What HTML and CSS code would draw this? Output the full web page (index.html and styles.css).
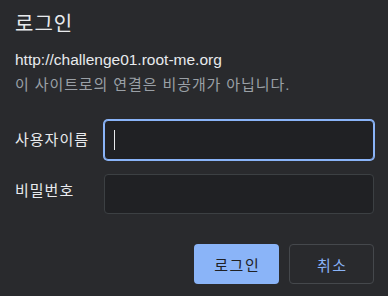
FILE: index.html
```html
<!DOCTYPE html>
<html lang="ko">
<head>
    <meta charset="UTF-8">
    <meta name="viewport" content="width=device-width, initial-scale=1.0">
    <title>로그인</title>
    <link rel="stylesheet" href="styles.css">
</head>
<body>

    <div class="dialog">
        <!-- Header -->
        <div class="dialog-title">로그인</div>
        <div class="site-url">http://challenge01.root-me.org</div>
        <div class="site-warning">이 사이트로의 연결은 비공개가 아닙니다.</div>

        <!-- Form -->
        <div class="form-row">
            <label class="form-label" for="username">사용자이름</label>
            <div class="text-field focused" id="username"><span class="caret"></span></div>
        </div>
        <div class="form-row second">
            <label class="form-label" for="password">비밀번호</label>
            <div class="text-field" id="password"></div>
        </div>

        <!-- Buttons -->
        <div class="button-row">
            <button class="btn btn-primary">로그인</button>
            <button class="btn btn-secondary">취소</button>
        </div>
    </div>

</body>
</html>
```

FILE: styles.css
```css
* {
    margin: 0;
    padding: 0;
    box-sizing: border-box;
    font-family: "Liberation Sans", "Noto Sans CJK KR", sans-serif;
}

body {
    background-color: #292a2d;
    color: #e8eaed;
    width: 388px;
    height: 296px;
    overflow: hidden;
}

.dialog {
    padding: 10px 14px 0 15px;
}

.dialog-title {
    font-size: 20px;
    line-height: 28px;
    letter-spacing: 1px;
}

.site-url {
    font-size: 15.5px;
    line-height: 20px;
    margin-top: 12px;
}

.site-warning {
    font-size: 15px;
    line-height: 20px;
    margin-top: 5px;
    letter-spacing: 0.9px;
    color: #9aa0a6;
}

.form-row {
    display: flex;
    align-items: center;
    margin-top: 25px;
}

.form-row.second {
    margin-top: 14px;
}

.form-label {
    width: 89px;
    font-size: 15px;
    line-height: 20px;
    letter-spacing: 1px;
}

.second .form-label {
    margin-top: -6px;
}

.text-field {
    width: 270px;
    height: 40px;
    background-color: #202124;
    border: 1px solid #3c4043;
    border-radius: 4px;
    display: flex;
    align-items: center;
    padding-left: 9px;
}

.text-field.focused {
    border-color: #8ab4f8;
    box-shadow: 0 0 0 1px #8ab4f8;
}

.caret {
    width: 1px;
    height: 20px;
    background-color: #e8eaed;
}

.button-row {
    display: flex;
    justify-content: flex-end;
    gap: 10px;
    margin-top: 30px;
}

.btn {
    width: 85px;
    height: 40px;
    border-radius: 4px;
    font-size: 15px;
    letter-spacing: 1.5px;
    text-indent: 1.5px;
    font-family: "Noto Sans CJK KR", sans-serif;
    cursor: pointer;
}

.btn-primary {
    background-color: #8ab4f8;
    color: #202124;
    border: none;
}

.btn-secondary {
    background-color: transparent;
    color: #8ab4f8;
    border: 1px solid #45484c;
}
```
